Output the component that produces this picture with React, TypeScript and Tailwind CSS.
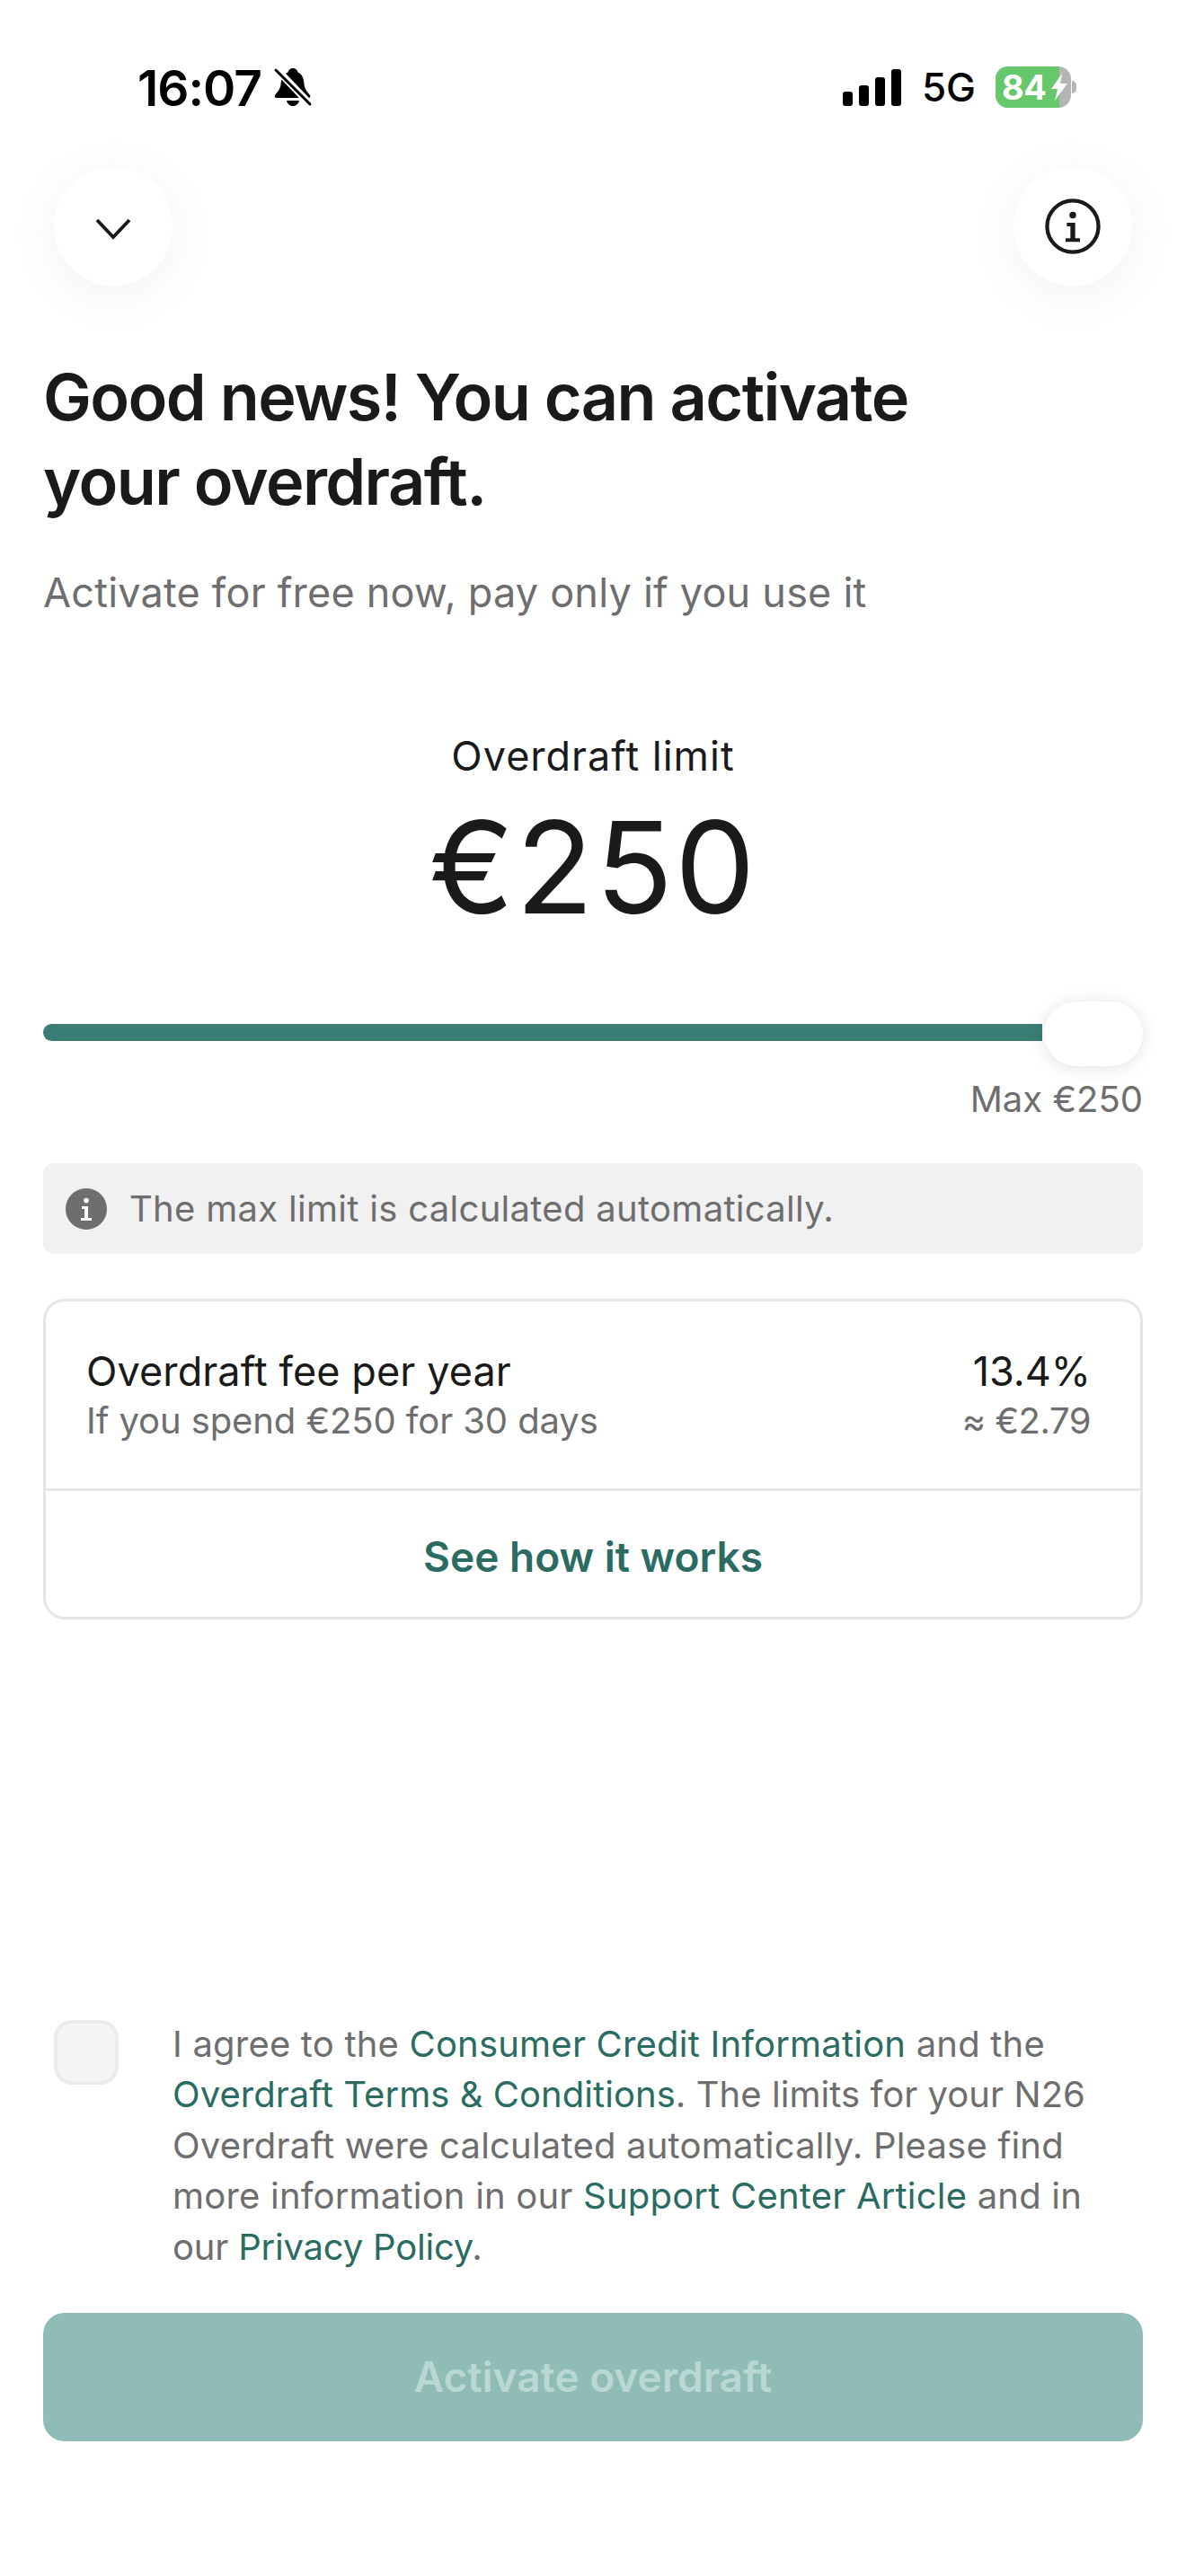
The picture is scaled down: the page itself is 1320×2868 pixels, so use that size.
import React from 'react';

const font = "font-['Inter',sans-serif]";

const BellOff = () => (
  <svg width="44" height="46" viewBox="0 0 44 46" fill="none">
    <path d="M22 1c3 0 5 2 5.500 4.500C33 8 34 13 34.500 19c.5 5 3.500 8 6.500 12 1 2 0 3-2 3H4c-2 0-3-1-2-3 3-4 6-7 6.500-12C9 13 11 8 16.500 5.500 17 3 19 1 22 1z" fill="#000" />
    <path d="M15 37h14c-1 4-4 6-7 6s-6-2-7-6z" fill="#000" />
    <path d="M1 -1 42 42" stroke="#fff" strokeWidth="8" />
    <path d="M3 3 41 41" stroke="#000" strokeWidth="3" strokeLinecap="round" />
  </svg>
);

const Signal = () => (
  <div className="flex items-end gap-[7px]">
    <div className="w-[11px] h-[16px] rounded-[3px] bg-black" />
    <div className="w-[11px] h-[23px] rounded-[3px] bg-black" />
    <div className="w-[11px] h-[32px] rounded-[3px] bg-black" />
    <div className="w-[11px] h-[41px] rounded-[3px] bg-black" />
  </div>
);

const InfoIcon = ({ size, color, bg }: { size: number; color: string; bg: string }) => (
  <svg width={size} height={size} viewBox="0 0 24 24" fill="none">
    <circle cx="12" cy="12" r="10.700" fill={bg} stroke={color} strokeWidth="1.600" />
    <circle cx="12" cy="7.300" r="1.400" fill={bg === 'none' ? color : '#fff'} />
    <path
      d="M9.500 10.500H13V17H15V18.500H9V17H11V12H9.500z"
      fill={bg === 'none' ? color : '#fff'}
    />
  </svg>
);

export default function App() {
  return (
    <div className={`${font} w-[1320px] h-[2868px] bg-white flex flex-col overflow-hidden text-[#1a1a1a]`}>
      {/* status bar */}
      <div className="h-[186px] shrink-0 flex justify-between items-start pt-[71px] pl-[153px] pr-[122px] text-black">
        <div className="flex items-center gap-[13px]">
          <span className="text-[55px] leading-[54px] font-semibold tracking-[-1px]">16:07</span>
          <BellOff />
        </div>
        <div className="flex items-center pt-[3px]">
          <Signal />
          <span className="ml-[23px] text-[44px] leading-[44px] font-medium">5G</span>
          <div className="ml-[22px] relative w-[84px] h-[46px] rounded-[14px] bg-[#b5b5b5]">
            <div className="w-[71px] h-full rounded-l-[14px] bg-[#66c86a] flex items-center pl-[7px] text-white text-[38px] leading-none font-bold tracking-[-0.500px]">84</div>
            <svg className="absolute left-[62px] top-[8px]" width="18" height="30" viewBox="0 0 18 30">
              <path d="M12 0 0 17h7l-3 13L18 11h-8z" fill="#fff" />
            </svg>
          </div>
          <div className="w-[5px] h-[14px] rounded-r-full bg-[#b5b5b5] ml-[1px]" />
        </div>
      </div>

      {/* top buttons */}
      <div className="shrink-0 flex justify-between px-[60px]">
        <div className="w-[132px] h-[132px] rounded-full bg-white shadow-[0_10px_60px_rgba(0,0,0,0.06)] flex items-center justify-center">
          <svg className="mt-[6px]" width="42" height="26" viewBox="0 0 42 26" fill="none">
            <path d="M3 3 21 22 39 3" stroke="#1a1a1a" strokeWidth="3.800" />
          </svg>
        </div>
        <div className="w-[132px] h-[132px] rounded-full bg-white shadow-[0_10px_60px_rgba(0,0,0,0.06)] flex items-center justify-center">
          <InfoIcon size={64} color="#1a1a1a" bg="none" />
        </div>
      </div>

      {/* content */}
      <div className="px-[48px] flex flex-col flex-1">
        <h1 className="mt-[77px] text-[72px] leading-[94px] font-semibold tracking-[-1.600px] text-[#1a1a1a]">
          Good news! You can activate<br />your overdraft.
        </h1>
        <p className="mt-[47px] text-[45px] leading-[60px] tracking-[0.220px] text-[#6e6e6e]">Activate for free now, pay only if you use it</p>

        <div className="mt-[122px] text-center text-[45px] leading-[60px] tracking-[1px] text-[#1a1a1a]">Overdraft limit</div>
        <div className="mt-[19px] text-center text-[142px] leading-[148px] tracking-[2px] text-[#1a1a1a]">€250</div>

        {/* slider */}
        <div className="mt-[101px] relative h-[19px] rounded-l-full bg-[#3a7d74] mr-[112px]">
          <div className="absolute left-[1114px] -top-[25px] w-[110px] h-[72px] rounded-full bg-white shadow-[0_2px_20px_rgba(0,0,0,0.12)]" />
        </div>
        <div className="mt-[39px] text-right text-[40px] leading-[52px] text-[#6e6e6e]">Max €250</div>

        {/* note */}
        <div className="mt-[45px] h-[101px] rounded-[12px] bg-[#f1f1f1] flex items-center pl-[24px] gap-[24px] text-[40px] tracking-[0.300px] text-[#6e6e6e]">
          <InfoIcon size={48} color="#6e6e6e" bg="#6e6e6e" />
          <span>The max limit is calculated automatically.</span>
        </div>

        {/* fee card */}
        <div className="mt-[50px] rounded-[24px] border-[3px] border-[#e6e6e6] flex flex-col">
          <div className="h-[211px] border-b-[3px] border-[#e6e6e6] flex justify-between items-center pl-[45px] pr-[55px]">
            <div>
              <div className="text-[45px] leading-[58px] tracking-[0.100px] text-[#1a1a1a]">Overdraft fee per year</div>
              <div className="text-[40px] leading-[52px] tracking-[-0.100px] text-[#6e6e6e]">If you spend €250 for 30 days</div>
            </div>
            <div className="text-right">
              <div className="text-[45px] leading-[58px] text-[#1a1a1a]">13.4%</div>
              <div className="text-[40px] leading-[52px] tracking-[-0.500px] text-[#6e6e6e]">≈ €2.79</div>
            </div>
          </div>
          <div className="h-[140px] pt-[6px] flex items-center justify-center text-[46px] font-semibold text-[#2a6b62]">See how it works</div>
        </div>

        <div className="flex-1" />

        {/* consent */}
        <div className="flex">
          <div className="ml-[12px] mt-[1px] w-[72px] h-[72px] rounded-[20px] bg-[#f5f5f5] border-[4px] border-[#ebebeb] shrink-0" />
          <p className="ml-[60px] text-[40px] leading-[56.500px] tracking-[0.200px] text-[#6e6e6e]">
            I agree to the <span className="text-[#2a6b62]">Consumer Credit Information</span> and the<br />
            <span className="tracking-[0.050px]"><span className="text-[#2a6b62]">Overdraft Terms &amp; Conditions</span>. The limits for your N26</span><br />
            Overdraft were calculated automatically. Please find<br />
            more information in our <span className="text-[#2a6b62]">Support Center Article</span> and in<br />
            <span className="tracking-[-0.200px]">our <span className="text-[#2a6b62]">Privacy Policy</span>.</span>
          </p>
        </div>

        <div className="mt-[45px] mb-[150px] h-[143px] rounded-[24px] bg-[#8fbcb6] flex items-center justify-center text-[46px] font-semibold text-[#b9d8d3]">
          Activate overdraft
        </div>
      </div>
    </div>
  );
}
